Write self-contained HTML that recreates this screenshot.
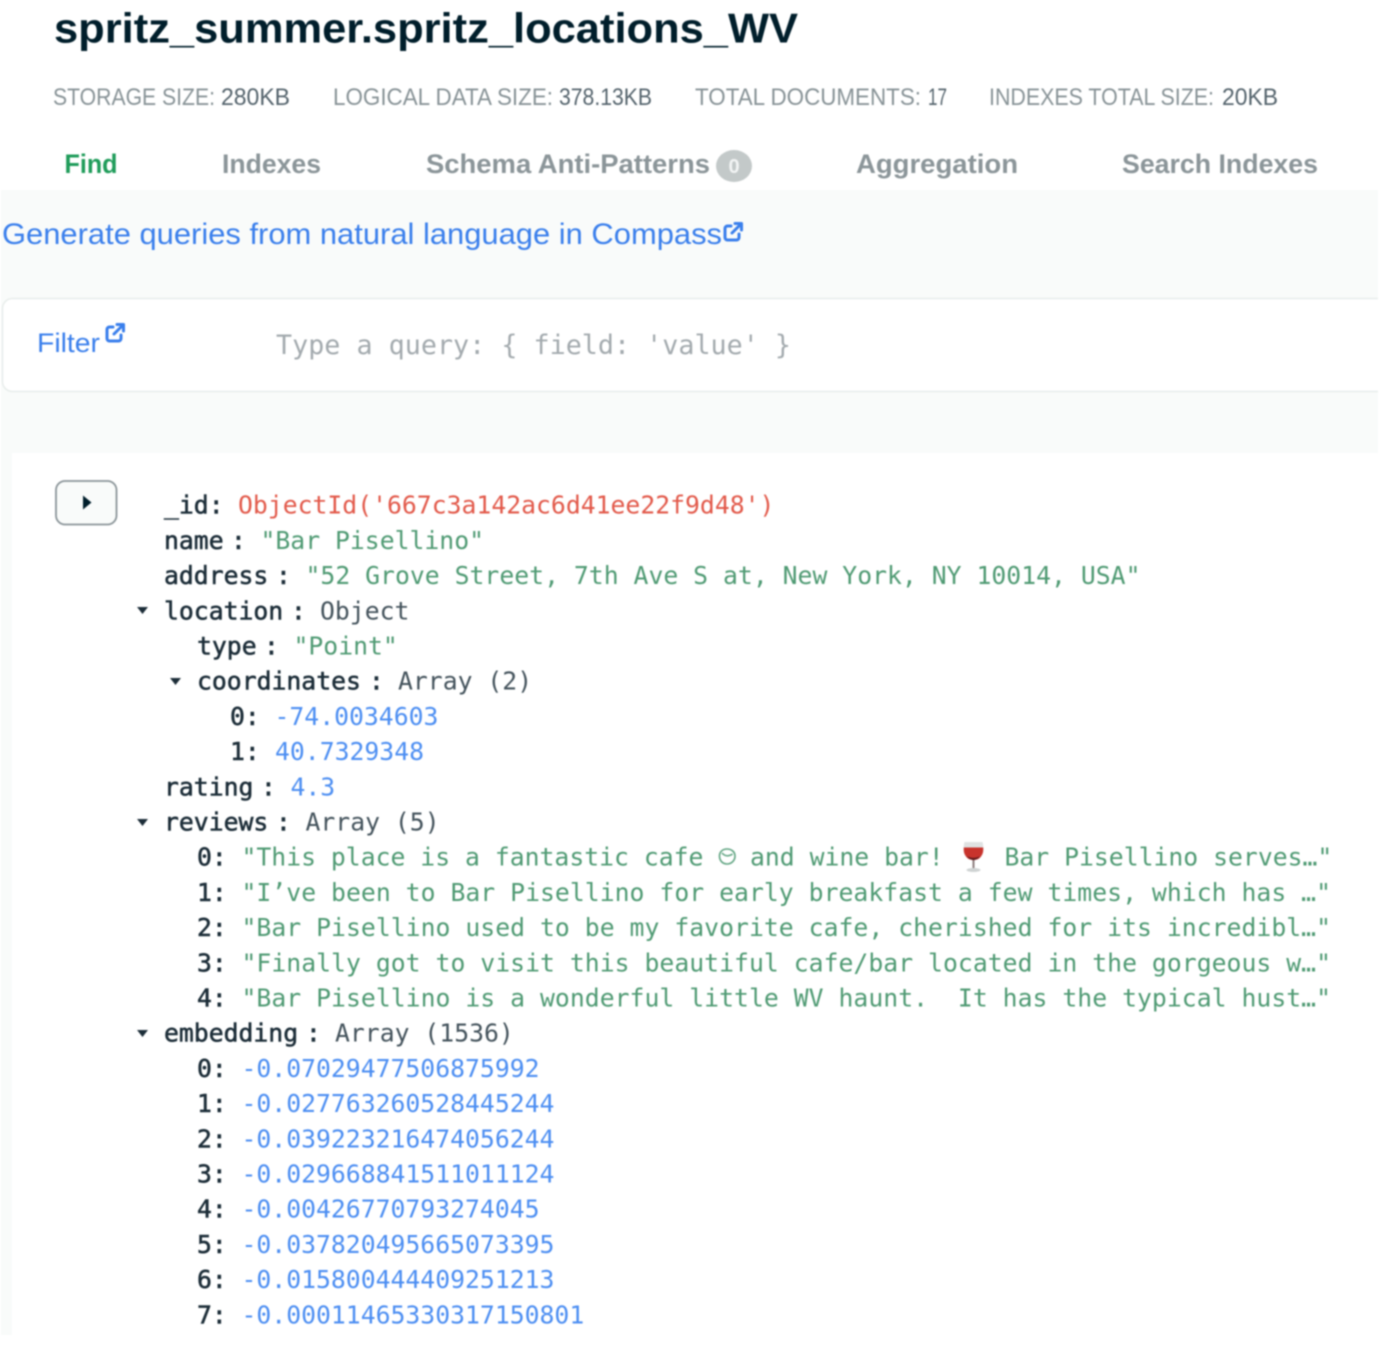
<!DOCTYPE html>
<html lang="en">
<head>
<meta charset="utf-8">
<title>spritz_summer.spritz_locations_WV</title>
<style>
html,body{margin:0;padding:0;background:#fff;width:1384px;height:1350px;overflow:hidden}
svg{display:block;filter:blur(.7px)}
.sans{font-family:"Liberation Sans",sans-serif}
.m{font-family:"DejaVu Sans Mono",monospace;font-size:24.75px;white-space:pre}
.k{fill:#1c2d38;stroke:#1c2d38;stroke-width:.55}
.t{fill:#44535c}
.s{fill:#4f9a73}
.n{fill:#4c8ef2}
.o{fill:#e2594a}
.lab{fill:#889397;font-size:24px}
.val{fill:#55646d;font-size:24px}
.tab{font-size:27px;font-weight:700;fill:#8b9599}
</style>
</head>
<body>
<svg width="1384" height="1350" viewBox="0 0 1384 1350" xmlns="http://www.w3.org/2000/svg">
<rect x="1" y="190" width="1377" height="1145" fill="#f9fbfa"/>
<rect x="2.5" y="298.500" width="1400" height="93" rx="10" fill="#fff" stroke="#e8edeb" stroke-width="1.500"/>
<rect x="12" y="453" width="1366" height="882" fill="#fff"/>
<rect x="1378" y="0" width="6" height="1350" fill="#fff"/>

<text class="sans" x="54" y="42.500" font-size="42" font-weight="700" fill="#001e2b" textLength="744" lengthAdjust="spacingAndGlyphs">spritz_summer.spritz_locations_WV</text>

<g class="sans">
<text class="lab" x="53" y="105" textLength="162" lengthAdjust="spacingAndGlyphs">STORAGE SIZE:</text>
<text class="val" x="221" y="105" textLength="69" lengthAdjust="spacingAndGlyphs">280KB</text>
<text class="lab" x="333" y="105" textLength="220" lengthAdjust="spacingAndGlyphs">LOGICAL DATA SIZE:</text>
<text class="val" x="559" y="105" textLength="93" lengthAdjust="spacingAndGlyphs">378.13KB</text>
<text class="lab" x="695" y="105" textLength="226" lengthAdjust="spacingAndGlyphs">TOTAL DOCUMENTS:</text>
<text class="val" x="928" y="105" textLength="19" lengthAdjust="spacingAndGlyphs">17</text>
<text class="lab" x="989" y="105" textLength="225" lengthAdjust="spacingAndGlyphs">INDEXES TOTAL SIZE:</text>
<text class="val" x="1222" y="105" textLength="56" lengthAdjust="spacingAndGlyphs">20KB</text>

<text class="tab" x="64.500" y="173" style="fill:#1f9c5a" textLength="53" lengthAdjust="spacingAndGlyphs">Find</text>
<text class="tab" x="222" y="173" textLength="99" lengthAdjust="spacingAndGlyphs">Indexes</text>
<text class="tab" x="426" y="173" textLength="284" lengthAdjust="spacingAndGlyphs">Schema Anti-Patterns</text>
<ellipse cx="734" cy="166" rx="18" ry="16" fill="#c3c9c9"/>
<text x="734" y="173" font-size="20" font-weight="700" fill="#f2f4f4" text-anchor="middle">0</text>
<text class="tab" x="856" y="173" textLength="162" lengthAdjust="spacingAndGlyphs">Aggregation</text>
<text class="tab" x="1122" y="173" textLength="196" lengthAdjust="spacingAndGlyphs">Search Indexes</text>

<text x="2" y="244" font-size="30" fill="#3a7fec" textLength="720" lengthAdjust="spacingAndGlyphs">Generate queries from natural language in Compass</text>
<text x="37" y="352" font-size="27" fill="#3a7fec" textLength="63" lengthAdjust="spacingAndGlyphs">Filter</text>
</g>

<g fill="none" stroke="#3a7fec" stroke-width="3" stroke-linecap="round" stroke-linejoin="round">
<path d="M731 226h-3.500a2.500 2.500 0 0 0-2.500 2.500v9a2.500 2.500 0 0 0 2.500 2.500h9a2.500 2.500 0 0 0 2.500-2.500v-3.500"/>
<path d="M732 233l9-9M735 223.500h6.500v6.500"/>
<path d="M113 327h-3.500a2.500 2.500 0 0 0-2.500 2.500v9a2.500 2.500 0 0 0 2.500 2.500h9a2.500 2.500 0 0 0 2.500-2.500v-3.500"/>
<path d="M114 334l9-9M117 324.500h6.500v6.500"/>
</g>

<text x="276" y="354" font-family="'DejaVu Sans Mono',monospace" font-size="26.700" fill="#a3aaae" style="white-space:pre" textLength="515">Type a query: { field: 'value' }</text>

<rect x="56" y="481" width="60.500" height="43.500" rx="9" fill="#f9fbfa" stroke="#8b9599" stroke-width="1.800"/>
<path d="M83 495.500l8.500 7-8.500 7z" fill="#001e2b"/>

<g fill="#1c2d38">
<path d="M137 607h11l-5.500 7z"/>
<path d="M170 678h11l-5.500 7z"/>
<path d="M137 819h11l-5.500 7z"/>
<path d="M137 1030h11l-5.500 7z"/>
</g>

<g class="m" transform="translate(0 .7)">
<text class="k" x="164" y="513">_id:</text><text class="o" x="238" y="513">ObjectId('667c3a142ac6d41ee22f9d48')</text>
<text class="k" x="164" y="548.200">name</text><text class="k" x="231" y="548.200">:</text><text class="s" x="260.500" y="548.200">"Bar Pisellino"</text>
<text class="k" x="164" y="583.400">address</text><text class="k" x="276" y="583.400">:</text><text class="s" x="305.500" y="583.400" textLength="835">"52 Grove Street, 7th Ave S at, New York, NY 10014, USA"</text>
<text class="k" x="164" y="618.600">location</text><text class="k" x="291" y="618.600">:</text><text class="t" x="320" y="618.600">Object</text>
<text class="k" x="197" y="653.800">type</text><text class="k" x="264" y="653.800">:</text><text class="s" x="293.500" y="653.800">"Point"</text>
<text class="k" x="197" y="689">coordinates</text><text class="k" x="369" y="689">:</text><text class="t" x="398" y="689">Array (2)</text>
<text class="k" x="230" y="724.200">0:</text><text class="n" x="274.500" y="724.200">-74.0034603</text>
<text class="k" x="230" y="759.400">1:</text><text class="n" x="275" y="759.400">40.7329348</text>
<text class="k" x="164" y="794.600">rating</text><text class="k" x="261" y="794.600">:</text><text class="n" x="290.500" y="794.600">4.3</text>
<text class="k" x="164" y="829.800">reviews</text><text class="k" x="276" y="829.800">:</text><text class="t" x="305.500" y="829.800">Array (5)</text>

<text class="k" x="197" y="865">0:</text><text class="s" x="241.500" y="865">"This place is a fantastic cafe</text><text class="s" x="750" y="865">and wine bar!</text><text class="s" x="1004.500" y="865">Bar Pisellino serves…"</text>
<text class="k" x="197" y="900.200">1:</text><text class="s" x="241.500" y="900.200" textLength="1089.500">"I’ve been to Bar Pisellino for early breakfast a few times, which has …"</text>
<text class="k" x="197" y="935.400">2:</text><text class="s" x="241.500" y="935.400" textLength="1089.500">"Bar Pisellino used to be my favorite cafe, cherished for its incredibl…"</text>
<text class="k" x="197" y="970.600">3:</text><text class="s" x="241.500" y="970.600" textLength="1089.500">"Finally got to visit this beautiful cafe/bar located in the gorgeous w…"</text>
<text class="k" x="197" y="1005.800">4:</text><text class="s" x="241.500" y="1005.800" textLength="1089.500">"Bar Pisellino is a wonderful little WV haunt.&#160;&#160;It has the typical hust…"</text>

<text class="k" x="164" y="1041">embedding</text><text class="k" x="306" y="1041">:</text><text class="t" x="335" y="1041">Array (1536)</text>

<text class="k" x="197" y="1076.200">0:</text><text class="n" x="241.500" y="1076.200">-0.07029477506875992</text>
<text class="k" x="197" y="1111.400">1:</text><text class="n" x="241.500" y="1111.400">-0.027763260528445244</text>
<text class="k" x="197" y="1146.600">2:</text><text class="n" x="241.500" y="1146.600">-0.039223216474056244</text>
<text class="k" x="197" y="1181.800">3:</text><text class="n" x="241.500" y="1181.800">-0.029668841511011124</text>
<text class="k" x="197" y="1217">4:</text><text class="n" x="241.500" y="1217">-0.00426770793274045</text>
<text class="k" x="197" y="1252.200">5:</text><text class="n" x="241.500" y="1252.200">-0.037820495665073395</text>
<text class="k" x="197" y="1287.400">6:</text><text class="n" x="241.500" y="1287.400">-0.015800444409251213</text>
<text class="k" x="197" y="1322.600">7:</text><text class="n" x="241.500" y="1322.600">-0.00011465330317150801</text>
</g>

<!-- coffee emoji -->
<g fill="none" stroke="#5fa481" stroke-width="1.600">
<path d="M719.500 856c0-4.500 3.500-7 7.500-7s8 2.500 8 7-3.500 8-8 8-7.500-3.500-7.500-8z"/>
<path d="M722 853c3 3.500 7 3.500 10.500 1"/>
</g>
<!-- wine glass emoji -->
<g>
<path d="M964.500 842h18c1.500 6 1 10.500-1.500 14-2 3-4.500 4-7.500 4s-5.500-1-7.500-4c-2.500-3.500-3-8-1.500-14z" fill="#dfe2e2"/>
<path d="M963.800 847.500h19.400c.3 4-.3 6.500-2.200 9-1.800 2.500-4.500 3.500-7.500 3.500s-5.700-1-7.500-3.500c-1.900-2.500-2.500-5-2.200-9z" fill="#c8332c"/>
<path d="M967 856c3.500 2.500 9.500 2.500 13 0-1.800 3-4.500 4-6.500 4s-4.700-1-6.500-4z" fill="#5e1a1c"/>
<rect x="972.500" y="860" width="2" height="9" fill="#8d7d7d"/>
<ellipse cx="973.500" cy="870" rx="7" ry="2" fill="#cfd3d3"/>
</g>
</svg>
</body>
</html>
